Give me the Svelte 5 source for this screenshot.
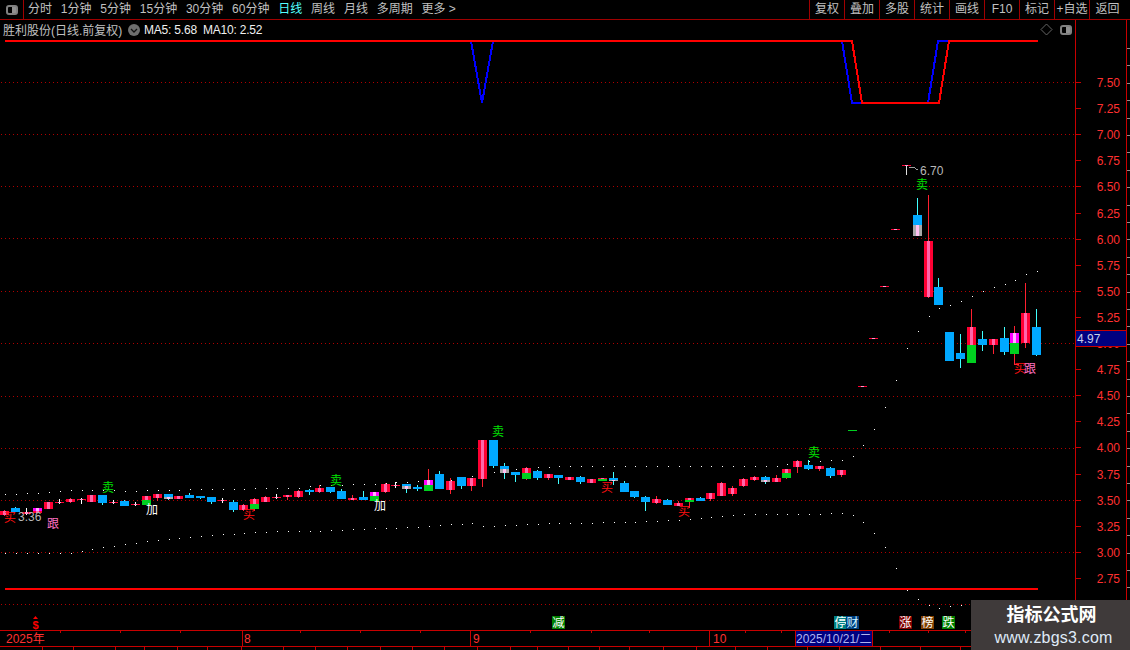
<script>
const periods = [
  { label: '分时' }, { label: '1分钟' }, { label: '5分钟' }, { label: '15分钟' },
  { label: '30分钟' }, { label: '60分钟' }, { label: '日线', active: true },
  { label: '周线' }, { label: '月线' }, { label: '多周期' }, { label: '更多 >' }
]
const actions = ['复权', '叠加', '多股', '统计', '画线', 'F10', '标记', '+自选', '返回']

// y pixel of a price on the axis
const priceY = p => Math.round(82 + (7.5 - p) * 104.4)
const prices = []
for (let p = 7.5; p >= 2.74; p -= 0.25) prices.push(p)
const gridY = [82, 134, 186, 238, 291, 343, 396, 448, 500, 552, 604]
const gridXs = []
for (let x = 1; x < 1075; x += 4) gridXs.push(x)

// kinds: r red, b blue, g grey, m magenta, n green, t thin cross
const fills = { r: '#ff0033', b: '#00a8ff', g: '#a8a8a8', m: '#ff00ff', n: '#00d020', t: '#ff0033' }
const stripes = { r: '#ff66aa', g: '#ffc0f0', m: '#ffb0ff', t: '#ff99cc' }
const wicks = { r: '#ff2030', b: '#40ffff', g: '#40ffff', m: '#ff2030', n: '#ff2030', t: '#ffffff' }

// [x, wick top, wick bottom, ...[kind, top, bottom]]
const candles = [
  [4, 510, 516, ['r', 511, 515]], [15, 507, 512, ['b', 508, 512]], [26, 508, 515, ['t', 512, 514]],
  [37, 508, 513, ['m', 508, 511], ['r', 511, 513]], [48, 502, 509, ['r', 502, 509]], [59, 499, 504, ['t', 502, 503]],
  [70, 498, 503, ['r', 499, 502]], [81, 498, 504, ['t', 499, 500]], [91, 495, 502, ['r', 495, 502]],
  [102, 495, 505, ['b', 495, 503]], [113, 500, 504, ['t', 502, 503]], [124, 500, 506, ['b', 501, 506]],
  [135, 502, 506, ['t', 504, 505]], [146, 496, 505, ['r', 496, 500], ['n', 500, 505]], [157, 494, 501, ['r', 494, 498]],
  [168, 494, 500, ['b', 494, 497], ['g', 497, 499]], [178, 496, 499, ['r', 496, 499]], [189, 493, 498, ['b', 495, 498]],
  [200, 496, 499, ['b', 496, 498]], [211, 497, 504, ['b', 497, 502]], [222, 498, 503, ['t', 500, 501]],
  [233, 500, 512, ['b', 502, 510]], [243, 504, 511, ['r', 505, 510]], [254, 498, 511, ['r', 499, 504], ['n', 504, 509]],
  [265, 496, 502, ['r', 497, 502]], [276, 494, 499, ['t', 497, 498]], [287, 495, 500, ['r', 495, 497]],
  [298, 490, 498, ['r', 491, 497]], [309, 489, 495, ['b', 490, 492]], [319, 485, 493, ['r', 488, 492]],
  [330, 487, 493, ['b', 487, 492]], [341, 489, 499, ['b', 491, 499]], [352, 495, 500, ['r', 498, 500]],
  [363, 491, 500, ['b', 497, 500]], [374, 492, 501, ['m', 492, 496], ['n', 496, 501]], [385, 483, 493, ['r', 484, 492]],
  [395, 482, 488, ['t', 485, 486]], [406, 484, 493, ['b', 484, 486], ['g', 486, 489]], [417, 485, 491, ['b', 487, 489]],
  [428, 469, 491, ['m', 480, 485], ['n', 485, 491]], [439, 471, 489, ['b', 474, 489]], [450, 478, 494, ['r', 481, 490]],
  [461, 477, 489, ['b', 477, 486]], [471, 478, 491, ['r', 478, 486]], [482, 440, 487, ['r', 440, 479]],
  [493, 440, 468, ['b', 440, 466]], [504, 463, 479, ['b', 466, 469], ['g', 469, 473]], [515, 472, 482, ['b', 472, 475]],
  [526, 467, 480, ['r', 468, 473], ['n', 473, 479]], [537, 470, 480, ['b', 471, 478]], [548, 474, 480, ['r', 474, 478]],
  [558, 475, 484, ['b', 475, 478]], [569, 477, 480, ['r', 477, 480]], [580, 476, 484, ['b', 477, 482]],
  [591, 479, 483, ['r', 479, 483]], [602, 478, 481, ['r', 478, 479], ['n', 479, 481]],
  [613, 472, 485, ['b', 478, 480], ['g', 480, 481]], [624, 481, 492, ['b', 483, 492]], [634, 491, 498, ['b', 491, 497]],
  [645, 496, 511, ['b', 497, 502]], [656, 496, 504, ['r', 499, 503]], [667, 499, 505, ['b', 500, 505]],
  [678, 501, 506, ['r', 503, 506]], [689, 498, 508, ['r', 498, 500], ['n', 500, 502]], [700, 497, 501, ['b', 498, 501]],
  [710, 493, 501, ['r', 493, 499]], [721, 482, 496, ['r', 483, 496]], [732, 486, 496, ['r', 488, 494]],
  [743, 478, 487, ['r', 479, 486]], [754, 476, 481, ['r', 477, 480]], [765, 476, 484, ['b', 477, 480], ['g', 480, 482]],
  [776, 475, 482, ['r', 478, 482]], [786, 469, 479, ['r', 469, 473], ['n', 473, 478]], [797, 460, 473, ['r', 461, 467]],
  [808, 460, 470, ['b', 465, 469]], [819, 466, 471, ['r', 466, 469]], [830, 467, 478, ['b', 468, 476]],
  [841, 470, 477, ['r', 470, 475]],
  [917, 198, 236, ['b', 215, 225], ['g', 225, 236]], [928, 195, 298, ['r', 241, 297]], [938, 278, 305, ['b', 287, 305]],
  [949, 332, 361, ['b', 332, 361]], [960, 334, 368, ['b', 353, 359]], [971, 309, 363, ['r', 327, 345], ['n', 345, 363]],
  [982, 331, 351, ['b', 339, 345]], [993, 339, 354, ['r', 339, 345]], [1004, 327, 355, ['b', 338, 352]],
  [1014, 326, 365, ['m', 333, 343], ['n', 343, 354]], [1025, 283, 348, ['r', 313, 343]], [1036, 309, 356, ['b', 327, 355]]
]
const dashes = [[862, 386], [873, 338], [884, 286], [895, 229], [906, 165]]

// straight pieces between anchors [x, y]
function bandY(anchors, x) {
  for (let i = 1; i < anchors.length; i++) {
    const [x0, y0] = anchors[i - 1]
    const [x1, y1] = anchors[i]
    if (x <= x1) return Math.round(y0 + (y1 - y0) * (x - x0) / (x1 - x0))
  }
  return anchors[anchors.length - 1][1]
}
const upper = [[4, 494], [37, 493], [70, 490], [113, 490], [124, 491], [157, 490], [211, 489], [276, 488], [298, 488],
  [319, 485], [374, 484], [395, 482], [450, 480], [493, 472], [515, 469], [558, 466], [775, 466], [786, 464], [808, 461],
  [841, 460], [852, 456], [862, 445], [873, 429], [884, 407], [895, 380], [906, 348], [917, 331], [928, 316], [938, 308],
  [949, 305], [960, 301], [971, 296], [982, 291], [993, 287], [1004, 284], [1014, 280], [1025, 274], [1036, 271]]
const lower = [[4, 553], [70, 553], [81, 551], [102, 547], [146, 541], [211, 535], [276, 531], [309, 531], [374, 528],
  [395, 528], [471, 523], [482, 526], [515, 525], [558, 523], [634, 522], [689, 519], [743, 514], [808, 514], [841, 513],
  [852, 515], [862, 522], [873, 533], [884, 547], [895, 568], [906, 590], [917, 599], [928, 605], [938, 608], [949, 606], [960, 605]]
const dotXs = [...candles.map(c => c[0]), 852, 862, 873, 884, 895, 906]

const signs = [
  { t: '卖', x: 108, y: 487, c: '#00e000' }, { t: '卖', x: 336, y: 480, c: '#00e000' },
  { t: '卖', x: 498, y: 431, c: '#00e000' }, { t: '卖', x: 814, y: 452, c: '#00e000' },
  { t: '卖', x: 922, y: 184, c: '#00e000' }, { t: '买', x: 10, y: 517, c: '#ff1010' },
  { t: '买', x: 249, y: 514, c: '#ff1010' }, { t: '买', x: 607, y: 487, c: '#ff1010' },
  { t: '买', x: 684, y: 511, c: '#ff1010' }, { t: '买', x: 1020, y: 368, c: '#ff1010' },
  { t: '跟', x: 53, y: 523, c: '#ff70c0' }, { t: '跟', x: 1030, y: 368, c: '#ff70c0' },
  { t: '加', x: 152, y: 509, c: '#ffffff' }, { t: '加', x: 380, y: 505, c: '#ffffff' }
]
const flags = [
  { t: '减', x: 552, w: 13, bg: '#008000' }, { t: '停', x: 834, w: 13, bg: '#008080' },
  { t: '财', x: 846, w: 13, bg: '#004080', c: '#d0f4ff' }, { t: '涨', x: 899, w: 13, bg: '#800000' },
  { t: '榜', x: 921, w: 13, bg: '#804000' }, { t: '跌', x: 942, w: 13, bg: '#008000' }
]
const months = [{ t: '2025年', x: 6 }, { t: '8', x: 244 }, { t: '9', x: 473 }, { t: '10', x: 713 }]
const monthLines = [242, 470, 709]
const dateTicks = [60, 120, 180, 300, 360, 420, 530, 591, 649, 745, 781, 889, 928, 965]
const stripTicks = [42, 73, 115, 144, 177, 207, 241, 283, 315, 347, 380, 412, 444, 477, 510, 537, 568, 599, 629, 663, 696, 735, 767, 807, 839, 880, 920, 960]
const edgeTicks = []
for (let y = 48; y < 630; y += 17.4) edgeTicks.push(Math.round(y))
</script>

<div class="screen">
  <div class="toolbar">
    <div class="panel-btn">
      <span class="panel-icon"></span>
    </div>
    <div class="periods">
      {#each periods as p}
        <span class="period" class:active={p.active}>{p.label}</span>
      {/each}
    </div>
    <div class="actions">
      {#each actions as a}
        <span class="action">{a}</span>
      {/each}
    </div>
  </div>

  <div class="titlebar">
    <div class="title-main">
      <span class="stock">胜利股份(日线.前复权)</span>
      <span class="round-icon">
        <svg width="12" height="12" viewBox="0 0 12 12">
          <circle cx="6" cy="6" r="6" fill="#6e6e6e" />
          <path d="M3 5l3 3 3-3" fill="none" stroke="#111" stroke-width="1.3" />
        </svg>
      </span>
      <span class="ma">MA5: 5.68</span>
      <span class="ma">MA10: 2.52</span>
      <span class="title-tools">
        <svg width="13" height="13" viewBox="0 0 13 13">
          <path d="M6.5 1L12 6.5 6.5 12 1 6.5z" fill="none" stroke="#666" />
        </svg>
        <span class="panel-icon"></span>
      </span>
    </div>
    <div class="title-axis"></div>
  </div>

  <svg class="chart" width="1130" height="611" viewBox="0 39 1130 611">
    <g shape-rendering="crispEdges">
      {#each gridY as y}
        {#each gridXs as x}
          <rect {x} {y} width="1" height="1" fill="#b00000" />
        {/each}
      {/each}

      <!-- signal lines -->
      <polyline points="471,41 482,103 493,41" fill="none" stroke="#0000ff" stroke-width="2" />
      <polyline points="842,41 852,103 862,103" fill="none" stroke="#0000ff" stroke-width="2" />
      <polyline points="928,103 938,41 949,41" fill="none" stroke="#0000ff" stroke-width="2" />
      <polyline points="5,41 852,41 862,103 939,103 949,41 1038,41" fill="none" stroke="#ff0000" stroke-width="2" />
      <rect x="5" y="588" width="1033" height="2" fill="#ff0000" />

      {#each dotXs as x}
        <rect x={x + 1} y={bandY(upper, x)} width="1" height="1" fill="#ffffff" />
        <rect x={x + 1} y={bandY(lower, x)} width="1" height="1" fill="#ffffff" />
      {/each}

      {#each candles as [x, top, bottom, ...parts]}
        <rect {x} y={top} width="1" height={bottom - top} fill={wicks[parts[0][0]]} />
        {#each parts as [kind, t, b]}
          <rect x={x - 4} y={t} width="9" height={b - t} fill={fills[kind]} />
          {#if stripes[kind]}
            <rect x={x - 1} y={t} width="3" height={b - t} fill={stripes[kind]} />
          {/if}
        {/each}
      {/each}

      {#each dashes as [x, y]}
        <rect x={x - 4} {y} width="9" height="1" fill="#ff0033" />
        <rect x={x - 1} {y} width="3" height="1" fill="#ff99cc" />
      {/each}
      <rect x="848" y="430" width="9" height="1" fill="#00d020" />

      <!-- marker of the 6.70 high -->
      <rect x="906" y="166" width="1" height="9" fill="#e0e0e0" />
      <polyline points="909,168 913,167 918,170" fill="none" stroke="#a0a0a0" />
      <!-- foot of the buy sign -->
      <rect x="1014" y="364" width="5" height="1" fill="#ff2030" />

      <!-- price axis -->
      <rect x="1075" y="39" width="1" height="591" fill="#c80000" />
      <rect x="1126" y="39" width="1" height="591" fill="#c80000" />
      {#each prices as p}
        <rect x="1076" y={priceY(p)} width="5" height="1" fill="#c80000" />
      {/each}
      {#each edgeTicks as y}
        <rect x="1127" {y} width="3" height="1" fill="#909090" />
      {/each}
    </g>

    {#each prices as p}
      <text class="price" x="1120" y={priceY(p) + 4.5}>{p.toFixed(2)}</text>
    {/each}

    <rect class="last-box" x="1075.5" y="330.5" width="51" height="16" />
    <text class="last-price" x="1077" y="343">4.97</text>

    {#each signs as s}
      <text class="sign" x={s.x} y={s.y + 5} fill={s.c}>{s.t}</text>
    {/each}
    <text class="note" x="18" y="521">3.36</text>
    <text class="note" x="920" y="175">6.70</text>

    <text class="dollar" x="35.500" y="629">$</text>
    <path d="M35.500 616l2.500 3h-5z" fill="#ff0000" />
    {#each flags as f}
      <rect x={f.x} y="616" width={f.w} height="13" fill={f.bg} />
      <text class="flag" x={f.x + f.w / 2} y="627" fill={f.c || '#ffffff'}>{f.t}</text>
    {/each}

    <!-- date axis -->
    <g shape-rendering="crispEdges">
      <rect x="0" y="630" width="1130" height="1" fill="#c80000" />
      <rect x="0" y="646" width="1130" height="1" fill="#c80000" />
      {#each monthLines as x}
        <rect {x} y="631" width="1" height="15" fill="#c80000" />
      {/each}
      {#each dateTicks as x}
        <rect {x} y="631" width="1" height="2" fill="#c80000" />
      {/each}
      {#each stripTicks as x}
        <rect {x} y="647" width="1" height="3" fill="#c80000" />
      {/each}
      <rect x="795.500" y="630.500" width="77" height="16" fill="#000080" stroke="#c80000" />
    </g>
    {#each months as m}
      <text class="month" x={m.x} y="643">{m.t}</text>
    {/each}
    <text class="cursor-date" x="796" y="643">2025/10/21/二</text>
  </svg>

  <div class="watermark">
    <span class="wm-name">指标公式网</span>
    <span class="wm-url">www.zbgs3.com</span>
  </div>
</div>

<style>
  :global(body) {
    margin: 0;
    background: #000;
  }

  .screen {
    position: relative;
    width: 1130px;
    height: 650px;
    overflow: hidden;
    background: #000;
    color: #c0c0c0;
    font-family: "Liberation Sans", "Noto Sans CJK SC", sans-serif;
    font-size: 12px;
  }

  .toolbar {
    display: flex;
    align-items: stretch;
    height: 19px;
    border-bottom: 1px solid #a00000;
    box-sizing: content-box;
    background: #000;
  }

  .panel-btn {
    display: flex;
    align-items: center;
    justify-content: center;
    width: 23px;
    border-right: 1px solid #a00000;
    box-sizing: content-box;
  }

  .panel-icon {
    display: block;
    width: 8px;
    height: 6px;
    border: 2px solid #808080;
    border-radius: 3px;
    background: linear-gradient(to right, #000 50%, #909090 50%);
  }

  .periods {
    display: flex;
    align-items: center;
    gap: 8.8px;
    padding-left: 4px;
  }

  .period {
    line-height: 19px;
    white-space: nowrap;
  }

  .period.active {
    color: #54ffff;
  }

  .actions {
    display: flex;
    margin-left: auto;
  }

  .action {
    width: 35px;
    box-sizing: border-box;
    border-left: 1px solid #a00000;
    line-height: 19px;
    text-align: center;
    white-space: nowrap;
  }

  .action:last-child {
    width: 41px;
    padding-right: 5px;
  }

  .titlebar {
    display: flex;
    height: 19px;
  }

  .title-main {
    display: flex;
    align-items: center;
    width: 1075px;
    padding-left: 3px;
    box-sizing: border-box;
  }

  .title-axis {
    width: 50px;
    height: 19px;
    box-sizing: content-box;
    border-left: 1px solid #c80000;
    border-right: 1px solid #c80000;
  }

  .stock {
    width: 125px;
    white-space: nowrap;
  }

  .round-icon {
    display: flex;
    width: 16px;
  }

  .ma {
    margin-right: 6px;
    color: #f0f0f0;
    letter-spacing: -0.2px;
    white-space: nowrap;
  }

  .title-tools {
    display: flex;
    align-items: center;
    gap: 7px;
    margin-left: auto;
    padding-right: 3px;
  }

  .chart {
    display: block;
  }

  .chart text {
    font-family: "Liberation Sans", "Noto Sans CJK SC", sans-serif;
    font-size: 12px;
  }

  .price {
    fill: #ff3030;
    text-anchor: end;
  }

  .last-box {
    fill: #000080;
    stroke: #c80000;
  }

  .last-price {
    fill: #c8d0e8;
  }

  .sign,
  .flag {
    text-anchor: middle;
  }

  .note {
    fill: #b8b8b8;
  }

  .chart .dollar {
    fill: #ff0000;
    font-size: 11px;
    font-weight: 700;
    text-anchor: middle;
  }

  .month {
    fill: #ff3030;
  }

  .cursor-date {
    fill: #b0b4f0;
  }

  .watermark {
    position: absolute;
    right: 0;
    bottom: 0;
    display: flex;
    flex-direction: column;
    align-items: center;
    width: 159px;
    height: 50px;
    padding: 4px 0 0 2px;
    box-sizing: border-box;
    background: #3f3a3a;
  }

  .wm-name {
    color: #fff;
    font-size: 18px;
    font-weight: 700;
    line-height: 23px;
  }

  .wm-url {
    margin-left: 4px;
    color: #dfeaf8;
    font-size: 16px;
    letter-spacing: 0.2px;
    line-height: 21px;
  }
</style>
